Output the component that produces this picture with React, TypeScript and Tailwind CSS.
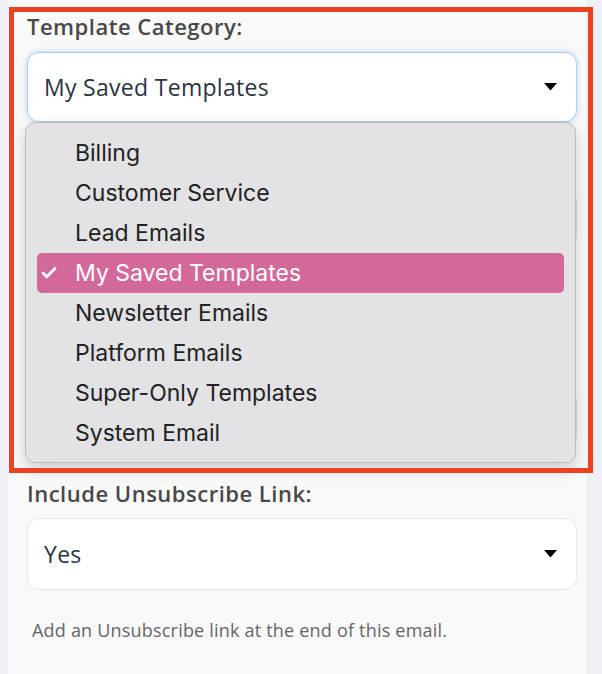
import { Check } from 'lucide-react';

const categories = [
  'Billing',
  'Customer Service',
  'Lead Emails',
  'My Saved Templates',
  'Newsletter Emails',
  'Platform Emails',
  'Super-Only Templates',
  'System Email',
];

function Caret() {
  return (
    <svg width="13" height="8" viewBox="0 0 13 8" className="shrink-0">
      <path d="M0 0 H13 L6.5 7.5 Z" fill="#000" />
    </svg>
  );
}

export default function App() {
  const selected = 'My Saved Templates';

  return (
    <div className="relative min-h-screen bg-[#edf0f4] font-['Open_Sans',sans-serif]">
      <div className="relative ml-2 h-[674px] w-[578px] overflow-hidden bg-[#f9f9f9] pl-[19px] pt-[12px]">
        {/* Template category */}
        <label className="block text-[22px] leading-[28px] font-semibold tracking-[0.5px] text-[#484848]">Template Category:</label>
        <div className="mt-[12px] flex h-[70px] w-[550px] items-center justify-between rounded-[12px] border border-[#a9cdf3] bg-white pl-[16px] pr-[19px] shadow-[0_0_6px_rgba(120,170,230,0.45)]">
          <span className="text-[23px] tracking-[0.3px] text-[#2b3443]">{selected}</span>
          <Caret />
        </div>

        {/* fields hidden under the open menu */}
        <div className="flex h-[357px] flex-col pt-[68px]">
          <div className="h-[57px] w-[550px] rounded-[12px] border border-[#dcdcdc] bg-white" />
          <div className="mt-[143px] h-[57px] w-[550px] rounded-[12px] border border-[#dcdcdc] bg-white" />
        </div>

        {/* Unsubscribe link */}
        <label className="block text-[22px] leading-[28px] font-semibold tracking-[0.5px] text-[#484848]">Include Unsubscribe Link:</label>
        <div className="mt-[11px] flex h-[72px] w-[550px] items-center justify-between rounded-[12px] border border-[#e6e6e6] bg-white pl-[16px] pr-[19px]">
          <span className="text-[23px] tracking-[0.3px] text-[#2b3443]">Yes</span>
          <Caret />
        </div>
        <p className="mt-[28px] pl-[5px] text-[18px] leading-[24px] tracking-[0.2px] text-[#666]">
          Add an Unsubscribe link at the end of this email.
        </p>

        {/* open native menu */}
        <div className="absolute left-[17px] top-[122px] h-[341px] w-[551px] rounded-[10px] border border-[#bdbdbd] bg-[#e3e2e5] px-[11px] pt-[10px] shadow-[0_6px_16px_rgba(0,0,0,0.18)] font-['Inter',sans-serif]">
          {categories.map((c) => {
            const active = c === selected;
            return (
              <div
                key={c}
                className={`flex h-[40px] items-center rounded-[5px] text-[23px] ${active ? 'bg-[#d2699a] text-white' : 'text-[#222]'}`}
              >
                <span className="flex w-[38px] pl-[3px]">
                  {active && <Check className="h-[18px] w-[18px]" strokeWidth={3.8} />}
                </span>
                <span>{c}</span>
              </div>
            );
          })}
        </div>
      </div>

      {/* red highlight */}
      <div className="pointer-events-none absolute left-[9px] top-[7px] h-[466px] w-[584px] border-[5px] border-[#ee4123]" />
    </div>
  );
}
